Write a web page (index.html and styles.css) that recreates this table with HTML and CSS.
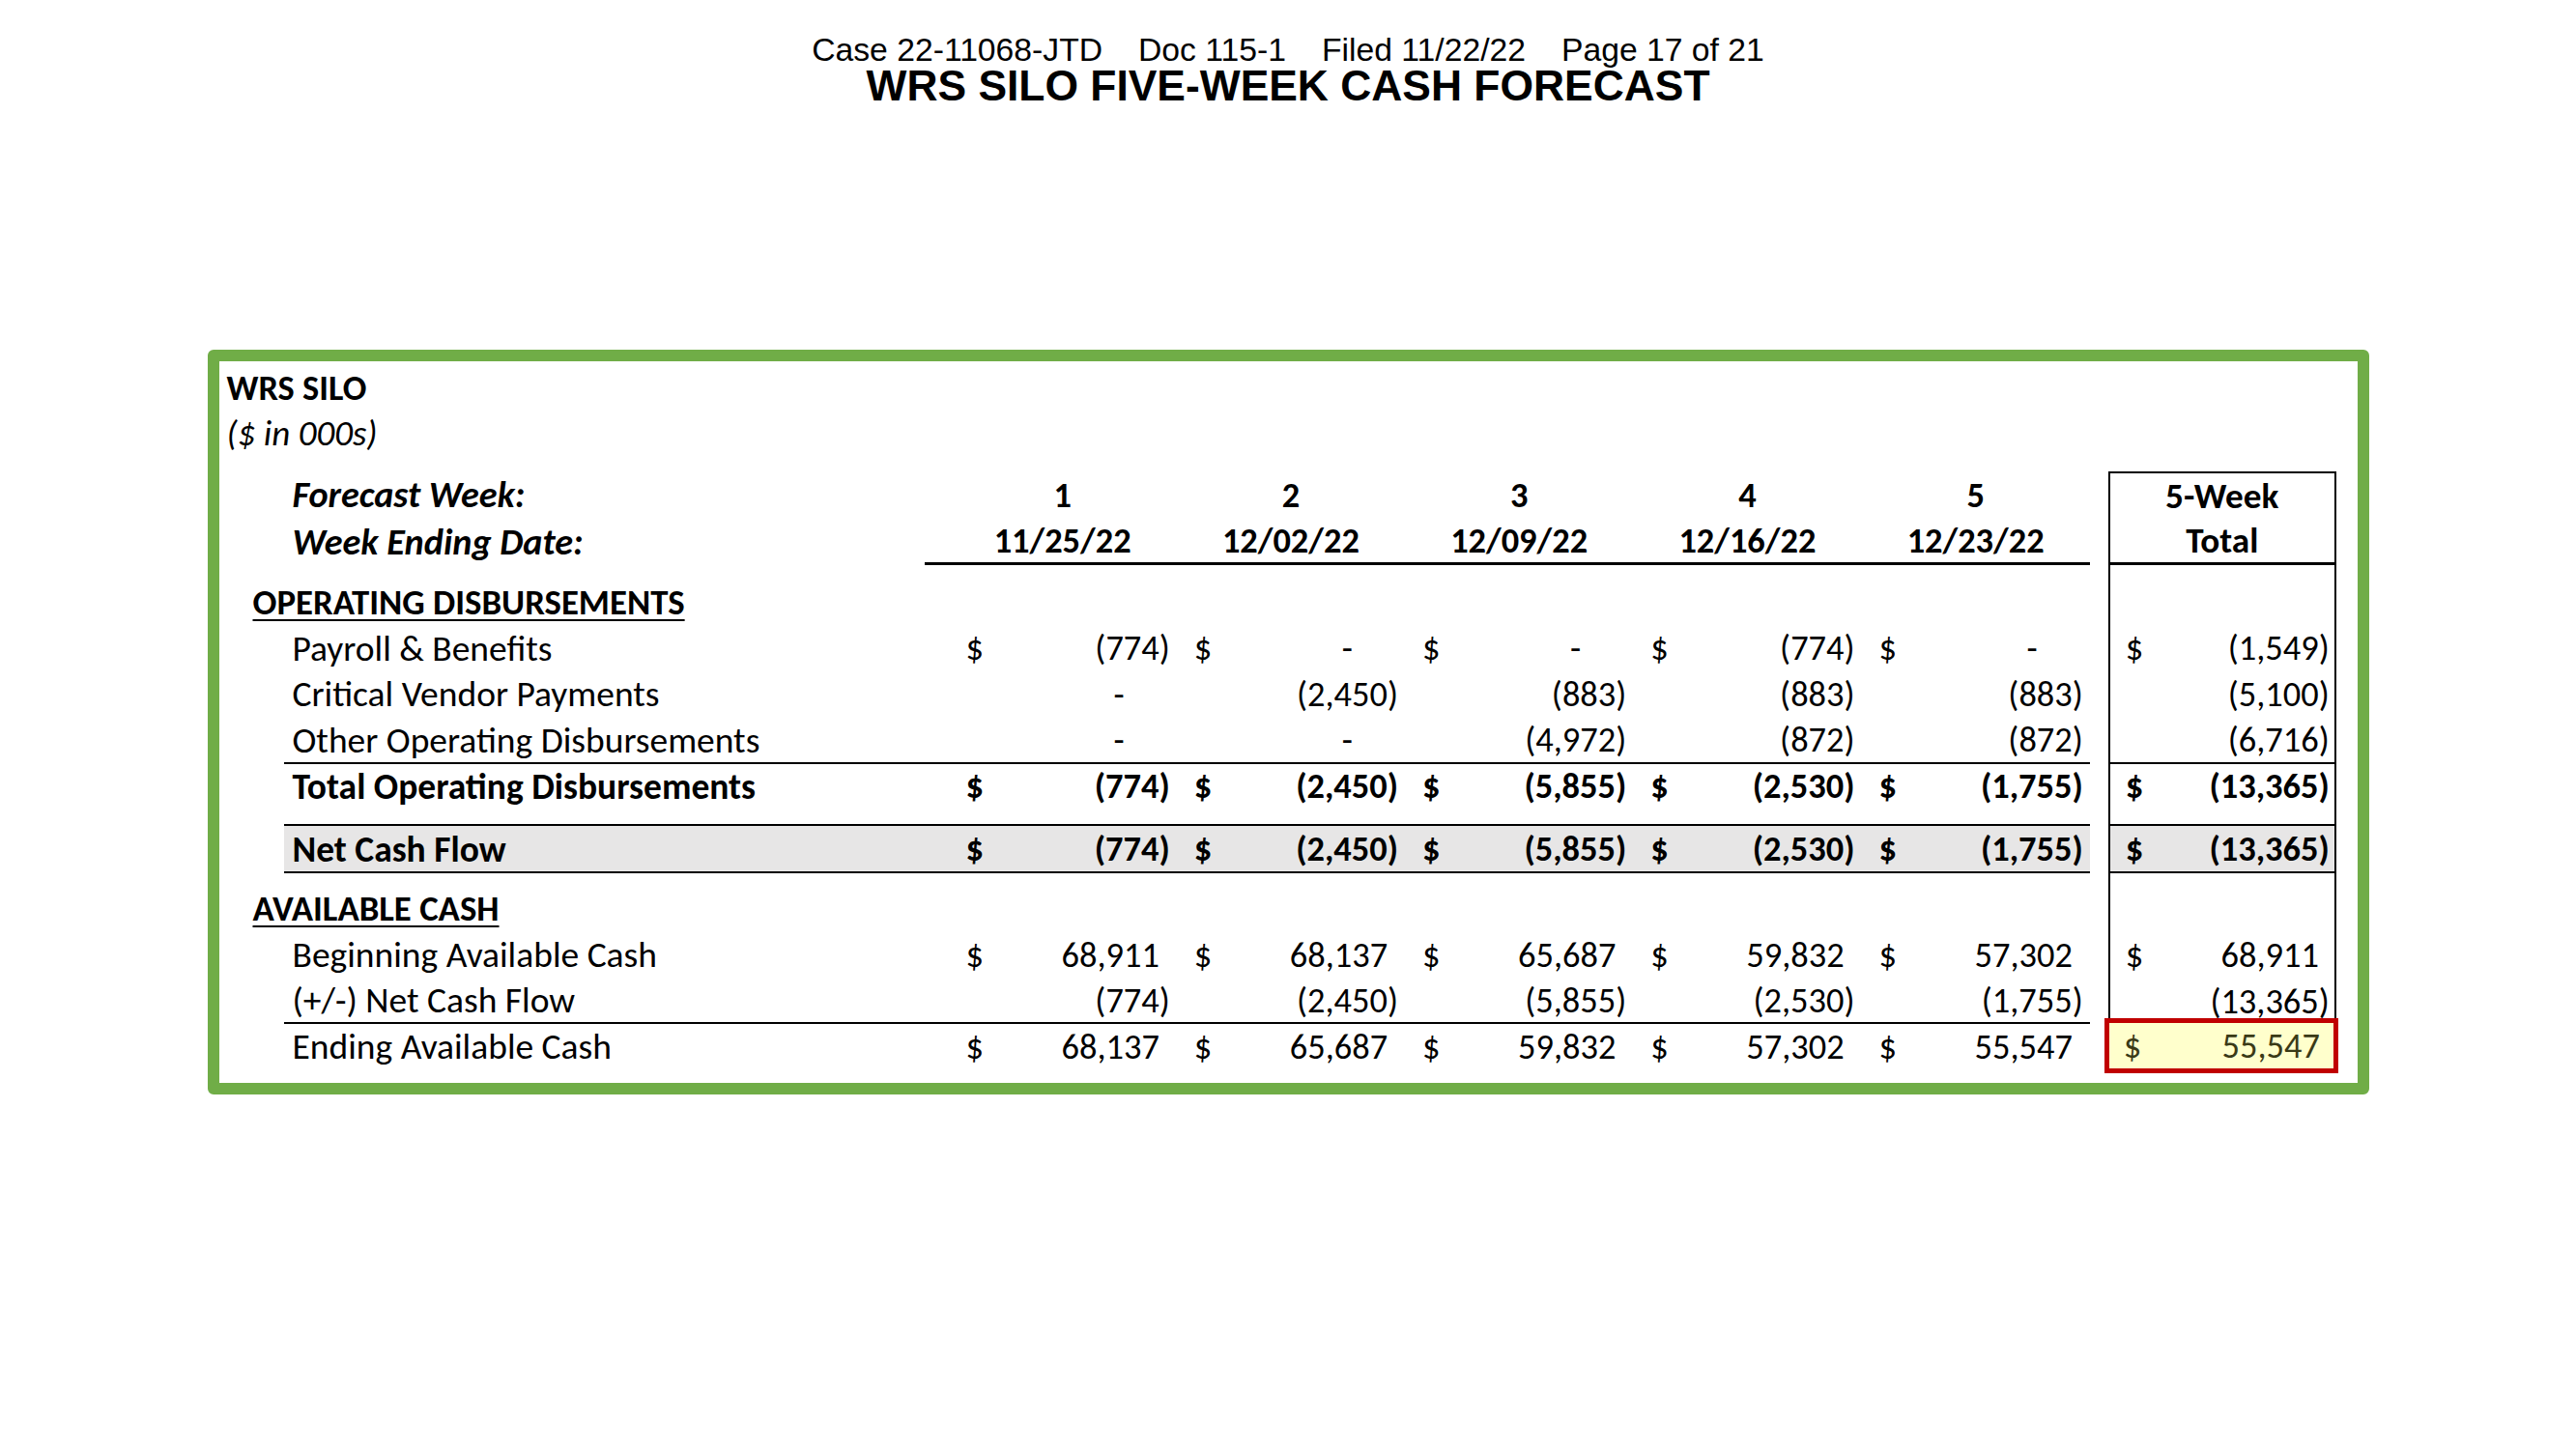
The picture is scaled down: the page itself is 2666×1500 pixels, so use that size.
FILE: index.html
```html
<!DOCTYPE html>
<html lang="en">
<head>
<meta charset="utf-8">
<title>WRS SILO Five-Week Cash Forecast</title>
<link rel="stylesheet" href="styles.css">
</head>
<body>
<header class="doc-head">
  <div class="stamp"><span>Case 22-11068-JTD</span><span>Doc 115-1</span><span>Filed 11/22/22</span><span>Page 17 of 21</span></div>
  <h1 class="title">WRS SILO FIVE-WEEK CASH FORECAST</h1>
</header>

<section class="frame">
  <div class="row">
    <div class="ent b">WRS SILO</div>
  </div>
  <div class="row">
    <div class="ent i">($ in 000s)</div>
  </div>
  <div class="row sp"></div>

  <div class="row">
    <div class="c1"></div>
    <div class="lab b i">Forecast Week:</div>
    <div class="gap"></div>
    <div class="hd">1</div><div class="hd">2</div><div class="hd">3</div><div class="hd">4</div><div class="hd">5</div>
    <div class="gap"></div>
    <div class="hd tot top">5-Week</div>
  </div>
  <div class="row">
    <div class="c1"></div>
    <div class="lab b i">Week Ending Date:</div>
    <div class="gap hl"></div>
    <div class="hd hl">11/25/22</div><div class="hd hl">12/02/22</div><div class="hd hl">12/09/22</div><div class="hd hl">12/16/22</div><div class="hd hl">12/23/22</div>
    <div class="gap"></div>
    <div class="hd tot hl">Total</div>
  </div>
  <div class="row sp">
    <div class="c1"></div><div></div><div></div><div></div><div></div><div></div><div></div><div></div><div></div>
    <div class="tot"></div>
  </div>

  <div class="row">
    <div class="sec">OPERATING DISBURSEMENTS</div>
    <div class="gap"></div>
    <div></div><div></div><div></div><div></div><div></div>
    <div class="gap"></div>
    <div class="tot"></div>
  </div>
  <div class="row">
    <div class="c1"></div>
    <div class="lab">Payroll &amp; Benefits</div>
    <div class="gap"></div>
    <div class="v"><span class="cur">$</span><span class="n">(774)</span></div>
    <div class="v"><span class="cur">$</span><span class="n z">-</span></div>
    <div class="v"><span class="cur">$</span><span class="n z">-</span></div>
    <div class="v"><span class="cur">$</span><span class="n">(774)</span></div>
    <div class="v"><span class="cur">$</span><span class="n z">-</span></div>
    <div class="gap"></div>
    <div class="v tot"><span class="cur">$</span><span class="n">(1,549)</span></div>
  </div>
  <div class="row">
    <div class="c1"></div>
    <div class="lab">Critical Vendor Payments</div>
    <div class="gap"></div>
    <div class="v"><span class="n z">-</span></div>
    <div class="v"><span class="n">(2,450)</span></div>
    <div class="v"><span class="n">(883)</span></div>
    <div class="v"><span class="n">(883)</span></div>
    <div class="v"><span class="n">(883)</span></div>
    <div class="gap"></div>
    <div class="v tot"><span class="n">(5,100)</span></div>
  </div>
  <div class="row">
    <div class="c1"></div>
    <div class="lab rl">Other Operating Disbursements</div>
    <div class="gap rl"></div>
    <div class="v rl"><span class="n z">-</span></div>
    <div class="v rl"><span class="n z">-</span></div>
    <div class="v rl"><span class="n">(4,972)</span></div>
    <div class="v rl"><span class="n">(872)</span></div>
    <div class="v rl"><span class="n">(872)</span></div>
    <div class="gap"></div>
    <div class="v tot rl"><span class="n">(6,716)</span></div>
  </div>
  <div class="row b">
    <div class="c1"></div>
    <div class="lab">Total Operating Disbursements</div>
    <div class="gap"></div>
    <div class="v"><span class="cur">$</span><span class="n">(774)</span></div>
    <div class="v"><span class="cur">$</span><span class="n">(2,450)</span></div>
    <div class="v"><span class="cur">$</span><span class="n">(5,855)</span></div>
    <div class="v"><span class="cur">$</span><span class="n">(2,530)</span></div>
    <div class="v"><span class="cur">$</span><span class="n">(1,755)</span></div>
    <div class="gap"></div>
    <div class="v tot"><span class="cur">$</span><span class="n">(13,365)</span></div>
  </div>
  <div class="row sp">
    <div class="c1"></div><div></div><div></div><div></div><div></div><div></div><div></div><div></div><div></div>
    <div class="tot"></div>
  </div>

  <div class="row b net">
    <div class="c1"></div>
    <div class="lab">Net Cash Flow</div>
    <div class="gap"></div>
    <div class="v"><span class="cur">$</span><span class="n">(774)</span></div>
    <div class="v"><span class="cur">$</span><span class="n">(2,450)</span></div>
    <div class="v"><span class="cur">$</span><span class="n">(5,855)</span></div>
    <div class="v"><span class="cur">$</span><span class="n">(2,530)</span></div>
    <div class="v"><span class="cur">$</span><span class="n">(1,755)</span></div>
    <div class="gap2"></div>
    <div class="v tot"><span class="cur">$</span><span class="n">(13,365)</span></div>
  </div>
  <div class="row sp">
    <div class="c1"></div><div></div><div></div><div></div><div></div><div></div><div></div><div></div><div></div>
    <div class="tot"></div>
  </div>

  <div class="row">
    <div class="sec">AVAILABLE CASH</div>
    <div class="gap"></div>
    <div></div><div></div><div></div><div></div><div></div>
    <div class="gap"></div>
    <div class="tot"></div>
  </div>
  <div class="row">
    <div class="c1"></div>
    <div class="lab">Beginning Available Cash</div>
    <div class="gap"></div>
    <div class="v"><span class="cur">$</span><span class="n p">68,911</span></div>
    <div class="v"><span class="cur">$</span><span class="n p">68,137</span></div>
    <div class="v"><span class="cur">$</span><span class="n p">65,687</span></div>
    <div class="v"><span class="cur">$</span><span class="n p">59,832</span></div>
    <div class="v"><span class="cur">$</span><span class="n p">57,302</span></div>
    <div class="gap"></div>
    <div class="v tot"><span class="cur">$</span><span class="n p">68,911</span></div>
  </div>
  <div class="row">
    <div class="c1"></div>
    <div class="lab rl">(+/-) Net Cash Flow</div>
    <div class="gap rl"></div>
    <div class="v rl"><span class="n">(774)</span></div>
    <div class="v rl"><span class="n">(2,450)</span></div>
    <div class="v rl"><span class="n">(5,855)</span></div>
    <div class="v rl"><span class="n">(2,530)</span></div>
    <div class="v rl"><span class="n">(1,755)</span></div>
    <div class="gap"></div>
    <div class="v tot"><span class="n">(13,365)</span></div>
  </div>
  <div class="row">
    <div class="c1"></div>
    <div class="lab">Ending Available Cash</div>
    <div class="gap"></div>
    <div class="v"><span class="cur">$</span><span class="n p">68,137</span></div>
    <div class="v"><span class="cur">$</span><span class="n p">65,687</span></div>
    <div class="v"><span class="cur">$</span><span class="n p">59,832</span></div>
    <div class="v"><span class="cur">$</span><span class="n p">57,302</span></div>
    <div class="v"><span class="cur">$</span><span class="n p">55,547</span></div>
    <div class="gap"></div>
    <div class="v hi"><span class="cur">$</span><span class="n p">55,547</span></div>
  </div>
</section>
</body>
</html>
```

FILE: styles.css
```css
* { box-sizing: border-box; }

body {
  margin: 0;
  background: #ffffff;
  color: #000000;
  font-family: Carlito, Lato, "Liberation Sans", sans-serif;
}

/* ---------- document stamp + title ---------- */
.doc-head {
  padding-top: 35px;
  text-align: center;
  font-family: "Liberation Sans", Arial, sans-serif;
}
.stamp {
  display: flex;
  justify-content: center;
  gap: 37px;
  font-size: 33.7px;
  line-height: 33px;
}
.title {
  margin: 0;
  font-size: 44.4px;
  line-height: 42px;
  font-weight: 700;
}

/* ---------- green frame ---------- */
.frame {
  width: 2237px;
  margin: 252px auto 0;
  border: 12px solid #70ad47;
  border-radius: 6px;
  padding: 3px 0 14px;
}

/* ---------- sheet rows ---------- */
.row {
  display: grid;
  grid-template-columns: 67px 663px 25px repeat(5, 236.25px) 19px 236px;
  height: 47.6px;
  font-size: 36.4px;
}
.row.sp { height: 15.8px; }

.b { font-weight: 700; }
.i { font-style: italic; }

.ent {
  grid-column: 1 / 3;
  display: flex;
  align-items: center;
  padding: 1px 0 0 8px;
  white-space: nowrap;
}
.ent.i { font-size: 37px; }
.sec {
  grid-column: 1 / 3;
  display: flex;
  align-items: center;
  padding: 1px 0 0 35px;
  font-size: 36.8px;
  font-weight: 700;
  white-space: nowrap;
  text-decoration: underline;
  text-decoration-thickness: 2px;
  text-underline-offset: 5px;
}
.lab {
  display: flex;
  align-items: center;
  padding: 1px 0 0 9px;
  font-size: 37.5px;
  white-space: nowrap;
}
.lab.i { font-size: 38.2px; }

.hd {
  display: flex;
  align-items: center;
  justify-content: center;
  padding-top: 1px;
  font-weight: 700;
}
.hd.tot { font-size: 37.2px; }

.v {
  display: flex;
  align-items: center;
  padding: 1px 7px 0 18px;
  white-space: nowrap;
}
.n { margin-left: auto; }
.n.p { padding-right: 0.3em; }
.n.z { padding-right: 47px; }

/* ---------- rules ---------- */
.hl { border-bottom: 3px solid #000; }
.rl { border-bottom: 2px solid #000; }

.tot {
  border-left: 2px solid #000;
  border-right: 2px solid #000;
}
.v.tot { padding: 1px 5px 0 16px; }
.tot.top { border-top: 2px solid #000; }

.net .lab,
.net .gap,
.net .v {
  background: #e7e6e6;
  border-top: 2px solid #000;
  border-bottom: 2px solid #000;
}

/* ---------- highlighted ending total ---------- */
.hi {
  margin: -5px -2px -4px -4px;
  border: 5px solid #c00000;
  background: #ffffcc;
  color: #3a3a16;
  padding: 1px 3px 0 15px;
}
```
